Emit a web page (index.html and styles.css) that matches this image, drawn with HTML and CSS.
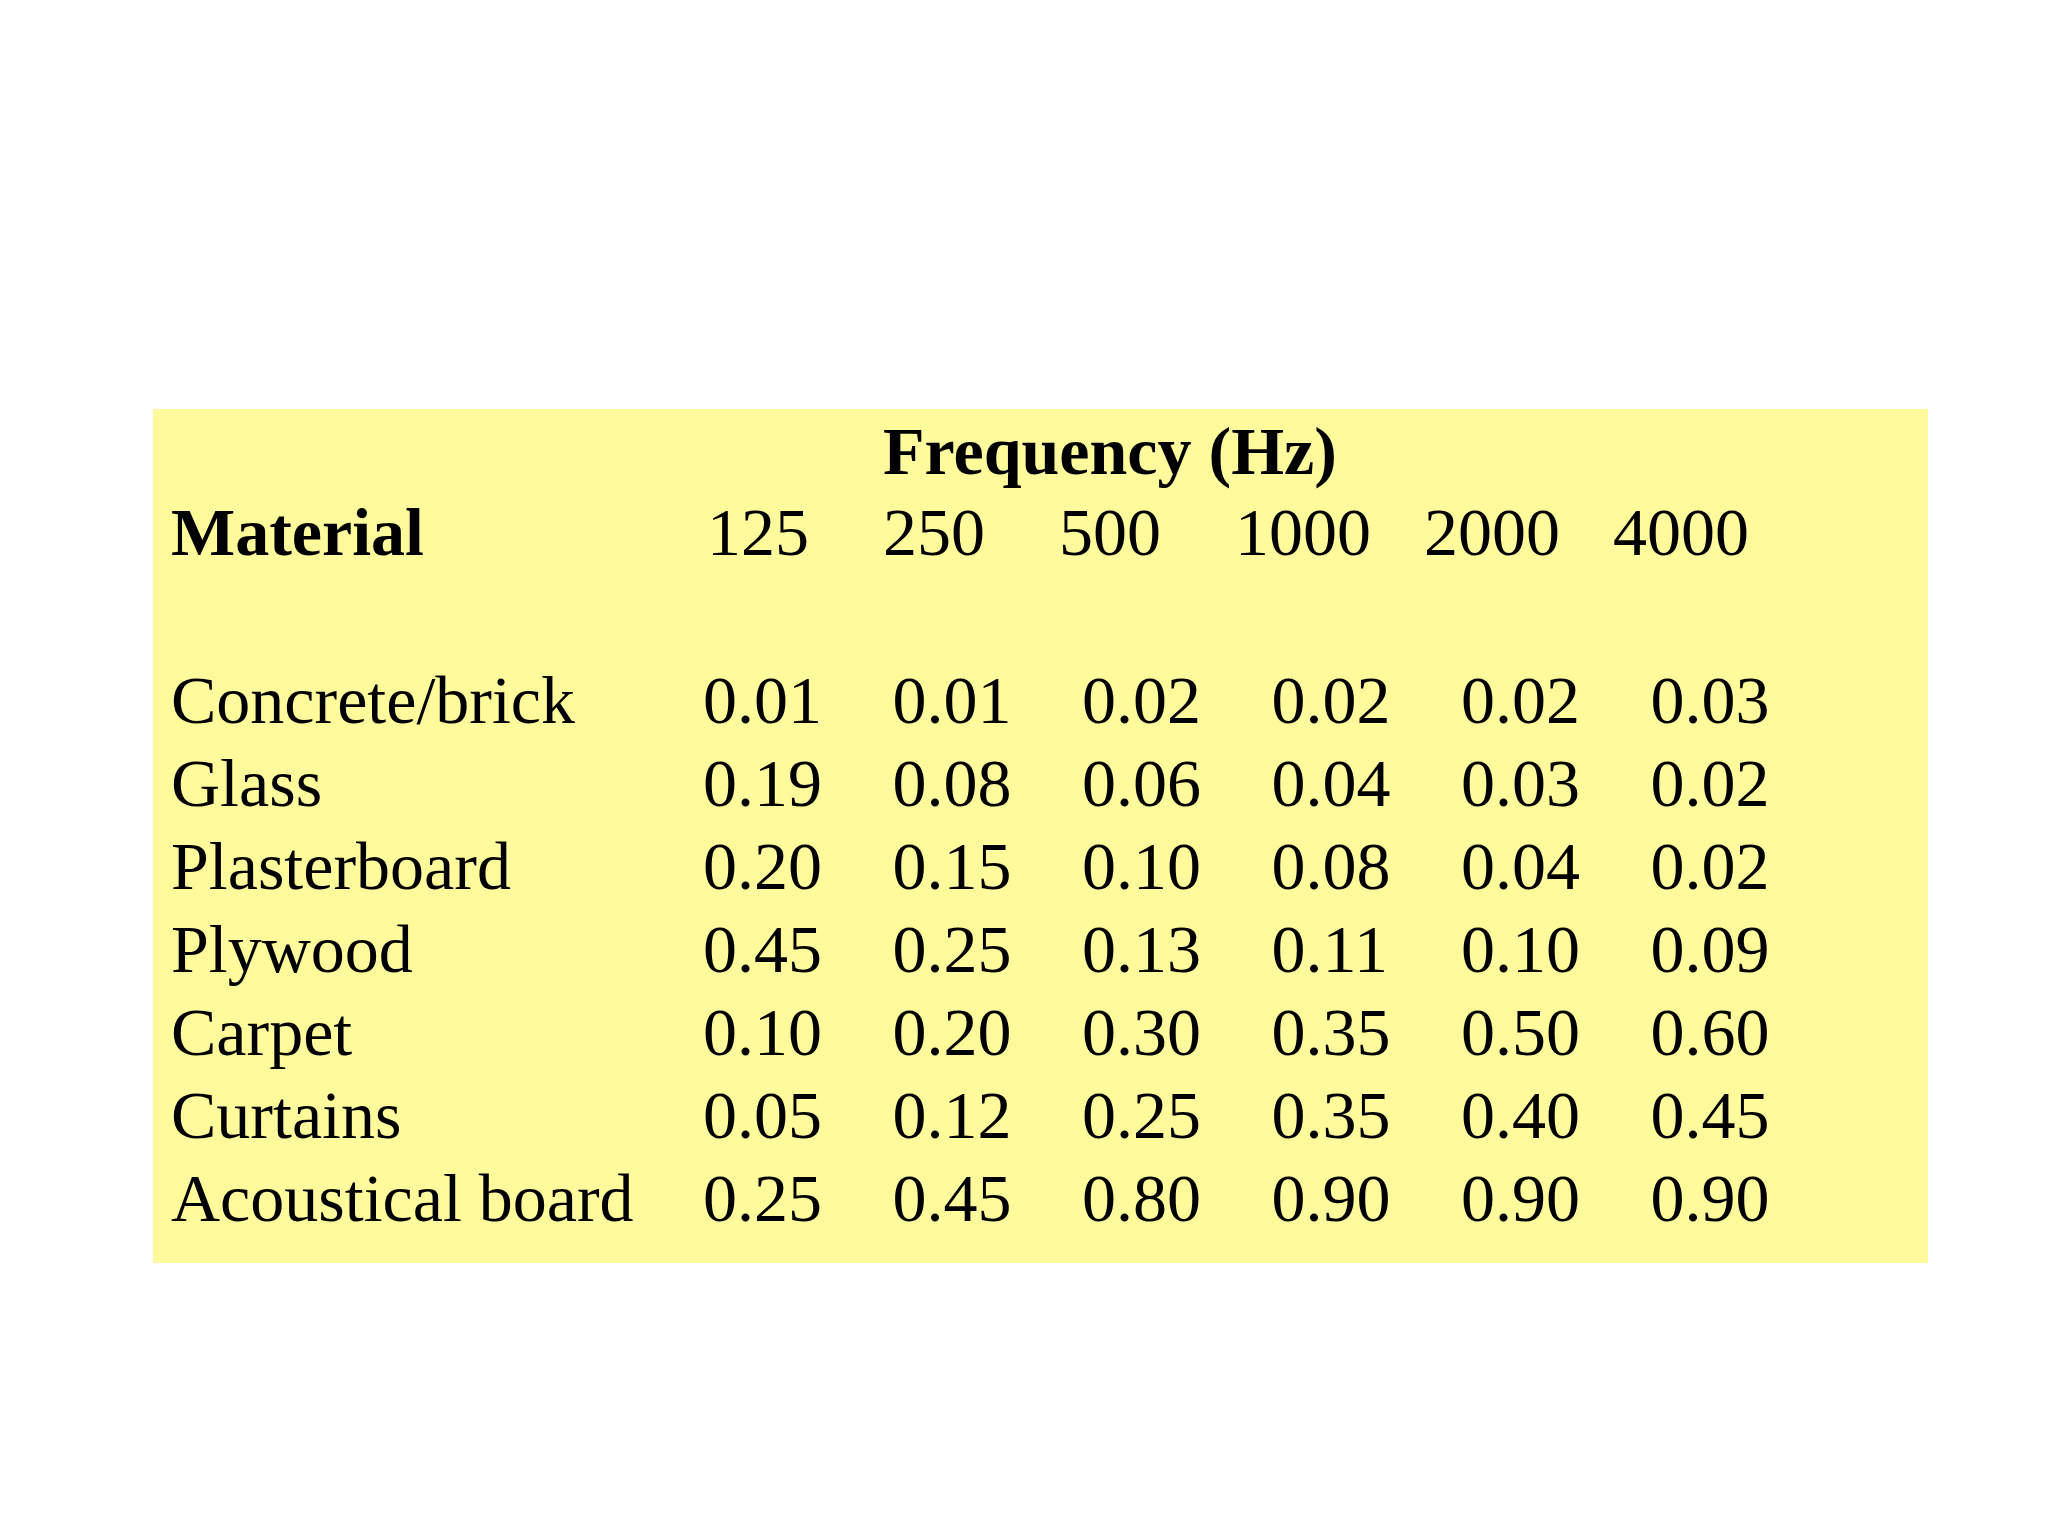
FILE: index.html
```html
<!DOCTYPE html>
<html lang="en">
<head>
<meta charset="utf-8">
<title>Absorption coefficients</title>
<link rel="stylesheet" href="styles.css">
</head>
<body>
<div class="panel">
  <div class="head">
    <div class="freq">Frequency (Hz)</div>
    <div class="mat">Material</div>
    <div class="hz">125</div>
    <div class="hz">250</div>
    <div class="hz">500</div>
    <div class="hz">1000</div>
    <div class="hz">2000</div>
    <div class="hz">4000</div>
  </div>
  <div class="rows">
    <div>Concrete/brick</div><div>0.01</div><div>0.01</div><div>0.02</div><div>0.02</div><div>0.02</div><div>0.03</div>
    <div>Glass</div><div>0.19</div><div>0.08</div><div>0.06</div><div>0.04</div><div>0.03</div><div>0.02</div>
    <div>Plasterboard</div><div>0.20</div><div>0.15</div><div>0.10</div><div>0.08</div><div>0.04</div><div>0.02</div>
    <div>Plywood</div><div>0.45</div><div>0.25</div><div>0.13</div><div>0.11</div><div>0.10</div><div>0.09</div>
    <div>Carpet</div><div>0.10</div><div>0.20</div><div>0.30</div><div>0.35</div><div>0.50</div><div>0.60</div>
    <div>Curtains</div><div>0.05</div><div>0.12</div><div>0.25</div><div>0.35</div><div>0.40</div><div>0.45</div>
    <div>Acoustical board</div><div>0.25</div><div>0.45</div><div>0.80</div><div>0.90</div><div>0.90</div><div>0.90</div>
  </div>
</div>
</body>
</html>
```
FILE: styles.css
```css
html, body {
  margin: 0;
  padding: 0;
  background: #ffffff;
}

body {
  padding: 409px 0 0 153px;
  font-family: "Liberation Serif", "Times New Roman", serif;
  font-size: 68px;
  color: #000000;
}

.panel {
  width: 1775px;
  height: 854px;
  box-sizing: border-box;
  background: #fffa9c;
  padding: 2px 0 0 18px;
}

.head {
  display: grid;
  grid-template-columns: 536px 176px 176px 176px 189px 189px 189px;
  line-height: 81px;
  white-space: nowrap;
}

.freq {
  grid-column: 3 / span 5;
  font-weight: bold;
}

.mat {
  grid-column: 1;
  font-weight: bold;
}

.rows {
  display: grid;
  grid-template-columns: 532px repeat(6, 189.5px);
  line-height: 83px;
  margin-top: 86px;
  white-space: nowrap;
}
```
